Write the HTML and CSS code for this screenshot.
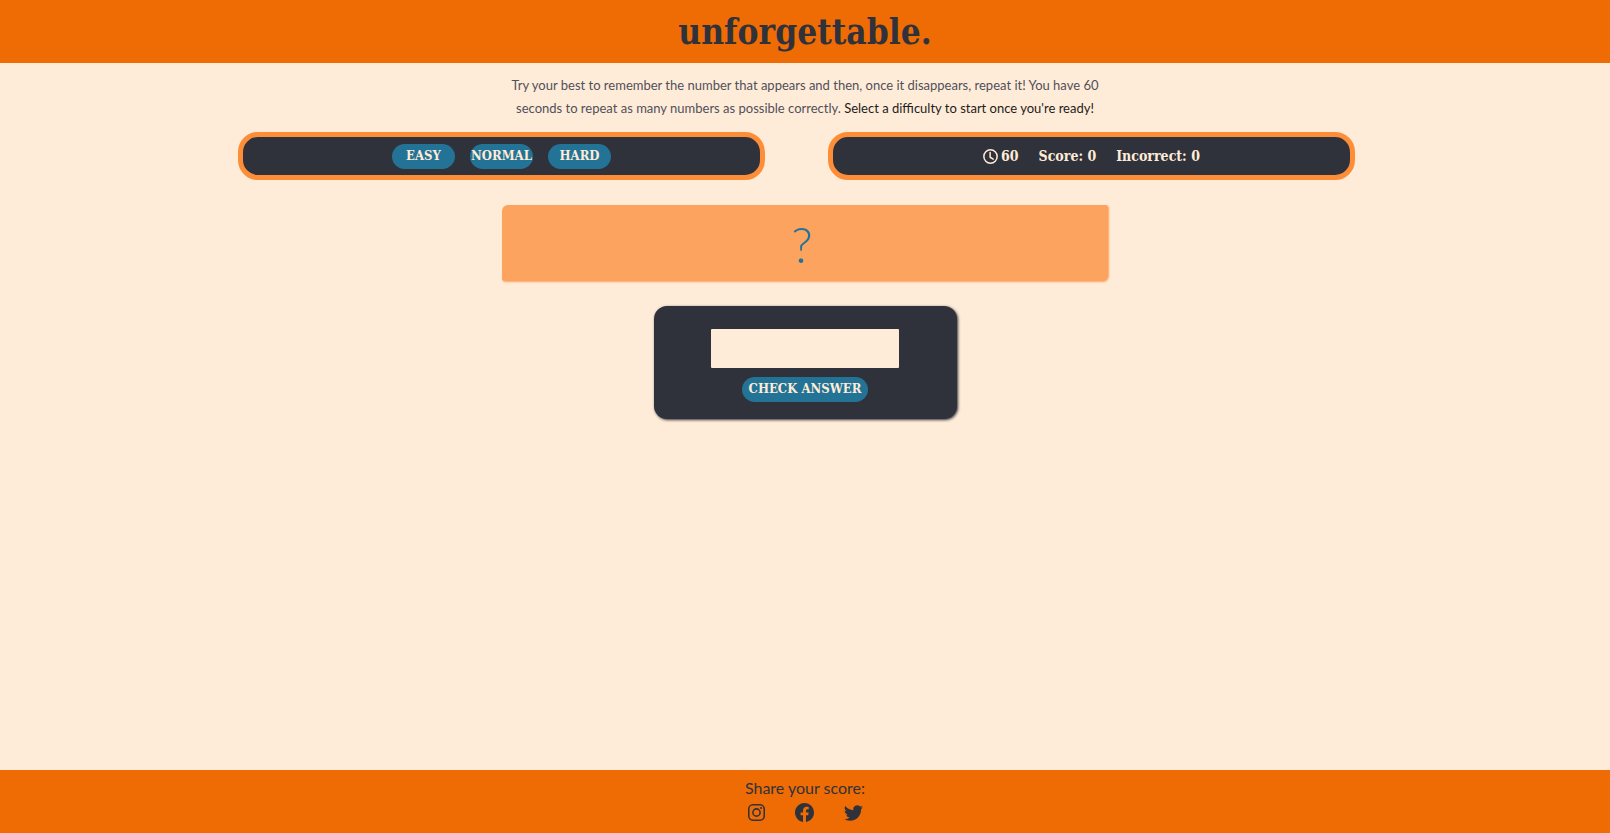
FILE: index.html
```html
<!DOCTYPE html>
<html lang="en">
<head>
<meta charset="utf-8">
<meta name="viewport" content="width=device-width, initial-scale=1">
<title>unforgettable.</title>
<link rel="stylesheet" href="styles.css">
</head>
<body>
<header class="site-header">
  <h1 class="brand">unforgettable.</h1>
</header>
<main class="game">
  <p class="intro">Try your best to remember the number that appears and then, once it disappears, repeat it! You have 60 seconds to repeat as many numbers as possible correctly. <span class="intro-strong">Select a difficulty to start once you're ready!</span></p>
  <div class="panels">
    <section class="panel levels" aria-label="Difficulty">
      <button class="pill level" type="button">EASY</button>
      <button class="pill level" type="button">NORMAL</button>
      <button class="pill level" type="button">HARD</button>
    </section>
    <section class="panel stats" aria-label="Score">
      <span class="timer"><svg class="clock" viewBox="0 0 16 16" fill="none" stroke="currentColor" stroke-width="1.6" stroke-linecap="round" stroke-linejoin="round" aria-hidden="true"><circle cx="8" cy="8" r="7.1"/><path d="M7.6 3.8V8.8L10.9 10.8"/></svg>60</span>
      <span>Score: 0</span>
      <span>Incorrect: 0</span>
    </section>
  </div>
  <div class="number">?</div>
  <form class="answer">
    <input class="answer-input" type="text" aria-label="Your answer">
    <button class="pill check" type="button">CHECK ANSWER</button>
  </form>
</main>
<footer class="site-footer">
  <p class="share">Share your score:</p>
  <nav class="social" aria-label="Share">
    <a href="#" aria-label="Instagram"><svg class="icon icon-small" viewBox="0 0 16 16" fill="none" stroke="currentColor" stroke-width="1.45" aria-hidden="true"><rect x=".72" y=".72" width="14.56" height="14.56" rx="4"/><circle cx="8" cy="8" r="3.4"/><circle cx="12.27" cy="3.73" r=".96" fill="currentColor" stroke="none"/></svg></a>
    <a href="#" aria-label="Facebook"><svg class="icon" viewBox="0 0 16 16" fill="currentColor" aria-hidden="true"><path d="M16 8.049c0-4.446-3.582-8.05-8-8.05C3.58 0-.002 3.603-.002 8.05c0 4.017 2.926 7.347 6.75 7.951v-5.625h-2.03V8.05H6.75V6.275c0-2.017 1.195-3.131 3.022-3.131.876 0 1.791.157 1.791.157v1.98h-1.009c-.993 0-1.303.621-1.303 1.258v1.51h2.218l-.354 2.326H9.25V16c3.824-.604 6.75-3.934 6.75-7.951"/></svg></a>
    <a href="#" aria-label="Twitter"><svg class="icon" viewBox="0 0 16 16" fill="currentColor" aria-hidden="true"><path d="M5.026 15c6.038 0 9.341-5.003 9.341-9.334q.002-.211-.006-.422A6.7 6.7 0 0 0 16 3.542a6.7 6.7 0 0 1-1.889.518 3.3 3.3 0 0 0 1.447-1.817 6.5 6.5 0 0 1-2.087.793A3.286 3.286 0 0 0 7.875 6.03a9.32 9.32 0 0 1-6.767-3.429 3.29 3.29 0 0 0 1.018 4.382A3.3 3.3 0 0 1 .64 6.575v.045a3.29 3.29 0 0 0 2.632 3.218 3.2 3.2 0 0 1-.865.115 3 3 0 0 1-.614-.057 3.28 3.28 0 0 0 3.067 2.277A6.6 6.6 0 0 1 .78 13.58a6 6 0 0 1-.78-.045A9.34 9.34 0 0 0 5.026 15"/></svg></a>
  </nav>
</footer>
</body>
</html>
```
FILE: styles.css
```css
:root {
  --orange: #ef6c05;
  --orange-mid: #fd8d36;
  --orange-soft: #fda360;
  --cream: #ffecd8;
  --ink: #30323b;
  --blue: #237396;
  --slab: "DejaVu Serif Condensed", "DejaVu Serif", serif;
  --sans: Lato, "Open Sans", sans-serif;
}

* {
  box-sizing: border-box;
}

body {
  display: flex;
  flex-direction: column;
  min-height: 100vh;
  margin: 0;
  background: var(--cream);
  color: var(--ink);
  font-family: var(--sans);
}

.site-header {
  padding: 6px 0 5px;
  background: var(--orange);
  text-align: center;
}

.brand {
  margin: 0;
  font-family: var(--slab);
  font-size: 35px;
  font-weight: 700;
  line-height: 52px;
}

.game {
  display: flex;
  flex: 1;
  flex-direction: column;
  align-items: center;
}

.intro {
  max-width: 606px;
  margin: 11px 0 12px;
  color: #50505a;
  font-size: 13px;
  line-height: 23px;
  text-align: center;
}

.intro-strong {
  color: #1c1c20;
}

.panels {
  display: grid;
  grid-template-columns: 1fr 1fr;
  gap: 63px;
  align-self: stretch;
  padding: 0 255px 0 238px;
}

.panel {
  display: flex;
  align-items: center;
  justify-content: center;
  min-height: 48px;
  border: 5px solid var(--orange-mid);
  border-radius: 20px;
  background: var(--ink);
}

.levels {
  gap: 15px;
}

.pill {
  height: 25px;
  padding: 0 0 2px;
  border: 0;
  border-radius: 13px;
  background: var(--blue);
  color: var(--cream);
  font-family: var(--slab);
  font-size: 13px;
  font-weight: 700;
  white-space: nowrap;
}

.level {
  width: 63px;
}

.stats {
  gap: 20px;
  color: var(--cream);
  font-family: var(--slab);
  font-size: 14px;
  font-weight: 700;
}

.timer {
  display: flex;
  align-items: center;
  gap: 3px;
}

.clock {
  width: 15px;
  height: 15px;
}

.number {
  width: 100%;
  max-width: 606px;
  margin-top: 25px;
  padding: 2px 6px 0 0;
  border-radius: 6px 2px;
  background: var(--orange-soft);
  box-shadow: 1px 1px 2px var(--orange-soft);
  color: var(--blue);
  font-size: 49px;
  font-weight: 300;
  line-height: 74px;
  text-align: center;
}

.answer {
  display: flex;
  flex-direction: column;
  align-items: center;
  gap: 9px;
  width: 303px;
  margin-top: 25px;
  padding: 23px 0 17px;
  border-radius: 13px;
  background: var(--ink);
  box-shadow: 1px 1px 3px var(--ink);
}

.answer-input {
  width: 188px;
  height: 39px;
  border: 0;
  border-radius: 1px;
  background: var(--cream);
  color: var(--ink);
  font-family: var(--sans);
  font-size: 20px;
  text-align: center;
}

.check {
  width: 126px;
}

.site-footer {
  padding: 6px 0 8px;
  background: var(--orange);
  text-align: center;
}

.share {
  margin: 0;
  font-size: 16px;
  line-height: 24px;
}

.social {
  display: flex;
  align-items: center;
  justify-content: center;
  gap: 30px;
  height: 25px;
}

.social a {
  display: flex;
  color: var(--ink);
}

.icon {
  width: 19px;
  height: 19px;
}

.icon-small {
  width: 17px;
  height: 17px;
}
```
